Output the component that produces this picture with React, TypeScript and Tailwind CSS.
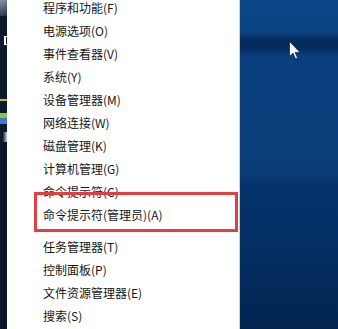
import React from "react";

const group1 = [
  "程序和功能(F)",
  "电源选项(O)",
  "事件查看器(V)",
  "系统(Y)",
  "设备管理器(M)",
  "网络连接(W)",
  "磁盘管理(K)",
  "计算机管理(G)",
  "命令提示符(C)",
  "命令提示符(管理员)(A)",
];
const group2 = ["任务管理器(T)", "控制面板(P)", "文件资源管理器(E)", "搜索(S)"];

function Row({ label }: { label: string }) {
  return (
    <div className="h-[23px] shrink-0 flex items-center pl-[36px] text-[12px] leading-none text-[#161616] whitespace-nowrap">
      {label}
    </div>
  );
}

export default function App() {
  return (
    <div
      className="relative flex w-[338px] h-[329px] overflow-hidden bg-white"
      style={{ fontFamily: '"Noto Sans CJK SC", "Noto Sans", sans-serif' }}
    >
      {/* left desktop strip */}
      <div className="w-[7px] shrink-0 flex flex-col bg-[#0c1a31]">
        <div className="h-[16px] shrink-0 bg-[linear-gradient(160deg,#8a93a3,#22314d)]" />
        <div className="h-[20px] shrink-0" />
        <div className="ml-[4px] h-[9px] w-[3px] shrink-0 border-l-2 border-y border-white" />
        <div className="h-[54px] shrink-0" />
        <div className="h-[2px] shrink-0 bg-[#c9b33a]" />
        <div className="h-[12px] shrink-0" />
        <div className="h-[5px] shrink-0 bg-[#8fc23a]" />
        <div className="h-[6px] shrink-0 bg-[#3a7bd0]" />
        <div className="h-[8px] shrink-0" />
        <div className="h-[10px] shrink-0 bg-[linear-gradient(90deg,#0c1a31_40%,#c9d2dd)]" />
        <div className="flex-1 bg-[#07142a]" />
      </div>

      {/* menu */}
      <div className="w-[233px] shrink-0 bg-white border-r border-[#cfcfcf] flex flex-col -mt-[4px]">
        {group1.map((l) => (
          <Row key={l} label={l} />
        ))}
        <div className="h-[9px] shrink-0" />
        {group2.map((l) => (
          <Row key={l} label={l} />
        ))}
      </div>

      {/* desktop */}
      <div className="relative flex-1 bg-[linear-gradient(180deg,#0b4686_0px,#0a4382_32px,#062c5b_40px,#052a57_47px,#0a3f7e_56px,#0a3f7c_150px,#093b76_176px,#05306a_186px,#043066_230px,#032a5a_280px,#022550_329px)]">
        <svg
          className="absolute left-[49px] top-[41px]"
          width="12"
          height="19"
          viewBox="0 0 12 19"
        >
          <path
            d="M0.5 0.5 L0.5 15.5 L4 12.2 L6.6 18 L8.6 17.1 L6.1 11.4 L11 11.4 Z"
            fill="#ffffff"
            stroke="#1b2a44"
            strokeWidth="0.8"
          />
        </svg>
      </div>

      {/* red highlight box */}
      <div className="absolute left-[34px] top-[192px] w-[204px] h-[40px] border-[3px] border-[#e2403f]" />
    </div>
  );
}
